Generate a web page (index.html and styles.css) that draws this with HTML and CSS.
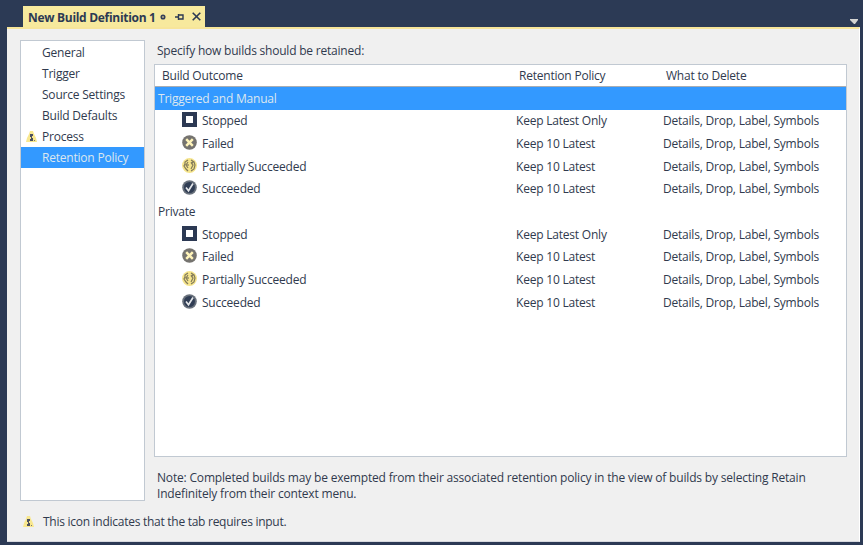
FILE: index.html
```html
<!DOCTYPE html>
<html lang="en">
<head>
<meta charset="utf-8">
<title>New Build Definition 1</title>
<link rel="stylesheet" href="styles.css">
</head>
<body>
<svg class="defs" width="0" height="0">
  <symbol id="warning" viewBox="0 0 11 12"><path d="M4 0h3l1 3 2 4 1 4H0l1-4 2-4z" fill="#f8e78e"/><path d="M4 3h3v2H6v2h1v3H4V8h1V6H4z" fill="#4c5060"/><path d="M8 9h1v1H8z" fill="#777"/></symbol>
  <symbol id="stopped" viewBox="0 0 15 15"><path d="M0 0h15v15H0z" fill="#2c3953"/><path d="M4 4h7v7H4z" fill="#fff"/></symbol>
  <symbol id="failed" viewBox="0 0 15 15"><circle cx="7.5" cy="7.5" r="7.3" fill="#75736f"/><path d="M4.2 4.2l6.6 6.6M10.8 4.2l-6.6 6.6" stroke="#fff4ba" stroke-width="2.5"/></symbol>
  <symbol id="partial" viewBox="0 0 15 15"><circle cx="7.5" cy="7.5" r="7.5" fill="#f6e58c"/><path d="M6 2L3 4v2l-1 2 2 3 2 2M6 4L4 7l2 3M9 2l3 2 1 3-1 4-3 2M9 4l2 3-2 4M6 6v2M9 6l2-2" fill="none" stroke="#827a5b" stroke-width="1.2"/></symbol>
  <symbol id="succeeded" viewBox="0 0 15 15"><circle cx="7.5" cy="7.5" r="7.3" fill="#68707b"/><circle cx="7.5" cy="7.5" r="5.5" fill="#303d54"/><path d="M4 7.5l2.5 3.3L11 3.5" fill="none" stroke="#e4e6e8" stroke-width="1.7"/></symbol>
</svg>
<header class="tabs">
  <div class="tab">
    <span class="tab-title">New Build Definition 1</span>
    <svg class="dot" width="6" height="6"><circle cx="3" cy="3" r="1.8" fill="#b5ac80" stroke="#35405a" stroke-width="1.5"/></svg>
    <svg class="pin" width="9" height="8"><path d="M0 4h3M3.5 1v6M4 2h4v4H4" fill="none" stroke="#2c3953" stroke-width="1.4"/></svg>
    <svg class="close" width="9" height="9"><path d="M.7.7l7.6 7.6M8.3.7L.7 8.3" stroke="#2c3953" stroke-width="1.6"/></svg>
  </div>
  <svg class="drop" width="8" height="5"><path d="M0 0h8v1L5 5H4L0 1z" fill="#d4d4d2"/></svg>
</header>
<main class="panel">
  <div class="content">
    <nav class="sidebar">
      <div class="item"><span>General</span></div>
      <div class="item"><span>Trigger</span></div>
      <div class="item"><span>Source Settings</span></div>
      <div class="item"><span>Build Defaults</span></div>
      <div class="item"><svg class="warn"><use href="#warning"/></svg><span>Process</span></div>
      <div class="item selected"><span>Retention Policy</span></div>
    </nav>
    <section class="details">
      <p class="intro">Specify how builds should be retained:</p>
      <div class="table">
        <div class="head row"><span>Build Outcome</span><span>Retention Policy</span><span>What to Delete</span></div>
        <div class="group selected">Triggered and Manual</div>
        <div class="row"><span class="outcome"><svg><use href="#stopped"/></svg>Stopped</span><span>Keep Latest Only</span><span>Details, Drop, Label, Symbols</span></div>
        <div class="row"><span class="outcome"><svg><use href="#failed"/></svg>Failed</span><span>Keep 10 Latest</span><span>Details, Drop, Label, Symbols</span></div>
        <div class="row"><span class="outcome"><svg><use href="#partial"/></svg>Partially Succeeded</span><span>Keep 10 Latest</span><span>Details, Drop, Label, Symbols</span></div>
        <div class="row"><span class="outcome"><svg><use href="#succeeded"/></svg>Succeeded</span><span>Keep 10 Latest</span><span>Details, Drop, Label, Symbols</span></div>
        <div class="group">Private</div>
        <div class="row"><span class="outcome"><svg><use href="#stopped"/></svg>Stopped</span><span>Keep Latest Only</span><span>Details, Drop, Label, Symbols</span></div>
        <div class="row"><span class="outcome"><svg><use href="#failed"/></svg>Failed</span><span>Keep 10 Latest</span><span>Details, Drop, Label, Symbols</span></div>
        <div class="row"><span class="outcome"><svg><use href="#partial"/></svg>Partially Succeeded</span><span>Keep 10 Latest</span><span>Details, Drop, Label, Symbols</span></div>
        <div class="row"><span class="outcome"><svg><use href="#succeeded"/></svg>Succeeded</span><span>Keep 10 Latest</span><span>Details, Drop, Label, Symbols</span></div>
      </div>
      <p class="note">Note: Completed builds may be exempted from their associated retention policy in the view of builds by selecting Retain<br>Indefinitely from their context menu.</p>
    </section>
  </div>
  <footer class="legend"><svg class="warn"><use href="#warning"/></svg><span>This icon indicates that the tab requires input.</span></footer>
</main>
</body>
</html>
```
FILE: styles.css
```css
* { box-sizing: border-box; }
body {
  margin: 0;
  width: 863px;
  height: 545px;
  overflow: hidden;
  background: #2c3a55;
  color: #303a4e;
  font: 12px/16px "Open Sans", "Noto Sans", sans-serif;
  letter-spacing: -0.21px;
  white-space: nowrap;
}
p { margin: 0; }
svg { flex: none; display: block; }
.defs { position: absolute; }
.tabs { display: flex; height: 27px; padding: 6px 5px 0 23px; justify-content: space-between; }
.tab { display: flex; align-items: center; width: 182px; height: 21px; padding: 2px 0 0 5px; background: #f7e99d; color: #2c3953; }
.tab-title { width: 128px; font-weight: 700; letter-spacing: -0.3px; }
.dot { margin: -2px 0 0 4px; }
.pin { margin: -1px 0 0 9px; }
.close { margin: -2px 0 0 8px; }
.drop { margin-top: 13px; }
.panel { width: 853px; height: 515px; margin-left: 7px; border-top: 2px solid #f7e59a; border-right: 1px solid #fff; border-bottom: 1px solid #d6d8de; background: #f0f0f0; }
.content { display: flex; padding: 11px 12px 0 13px; gap: 9px; height: 472px; }
.sidebar { width: 125px; height: 461px; padding-top: 1px; border: 1px solid #c1c9d2; background: #fff; }
.item { display: flex; align-items: center; height: 21px; padding-left: 21px; }
.item .warn { margin: 0 5px 0 -16px; }
.warn { width: 11px; height: 12px; }
.selected { background: #3399ff; color: #dce7ef; }
.details { width: 693px; }
.intro { height: 24px; padding: 3px 0 0 3px; }
.table { height: 393px; border: 1px solid #c1c9d2; background: #fff; }
.row { display: grid; grid-template-columns: 361px 147px 1fr; align-items: center; height: 22.65px; padding-top: 1px; }
.head { height: 22px; padding-left: 7px; border-bottom: 1px solid #a8adb3; grid-template-columns: 357px 147px 1fr; }
.group { height: 22.65px; line-height: 24px; padding-left: 3px; }
.outcome { display: flex; align-items: center; gap: 5px; padding-left: 27px; }
.outcome svg { width: 15px; height: 15px; margin-top: -3px; }
.note { padding: 13px 0 0 3px; letter-spacing: -0.18px; }
.legend { display: flex; align-items: center; gap: 9px; height: 40px; padding: 2px 0 0 16px; letter-spacing: -0.27px; }
```
